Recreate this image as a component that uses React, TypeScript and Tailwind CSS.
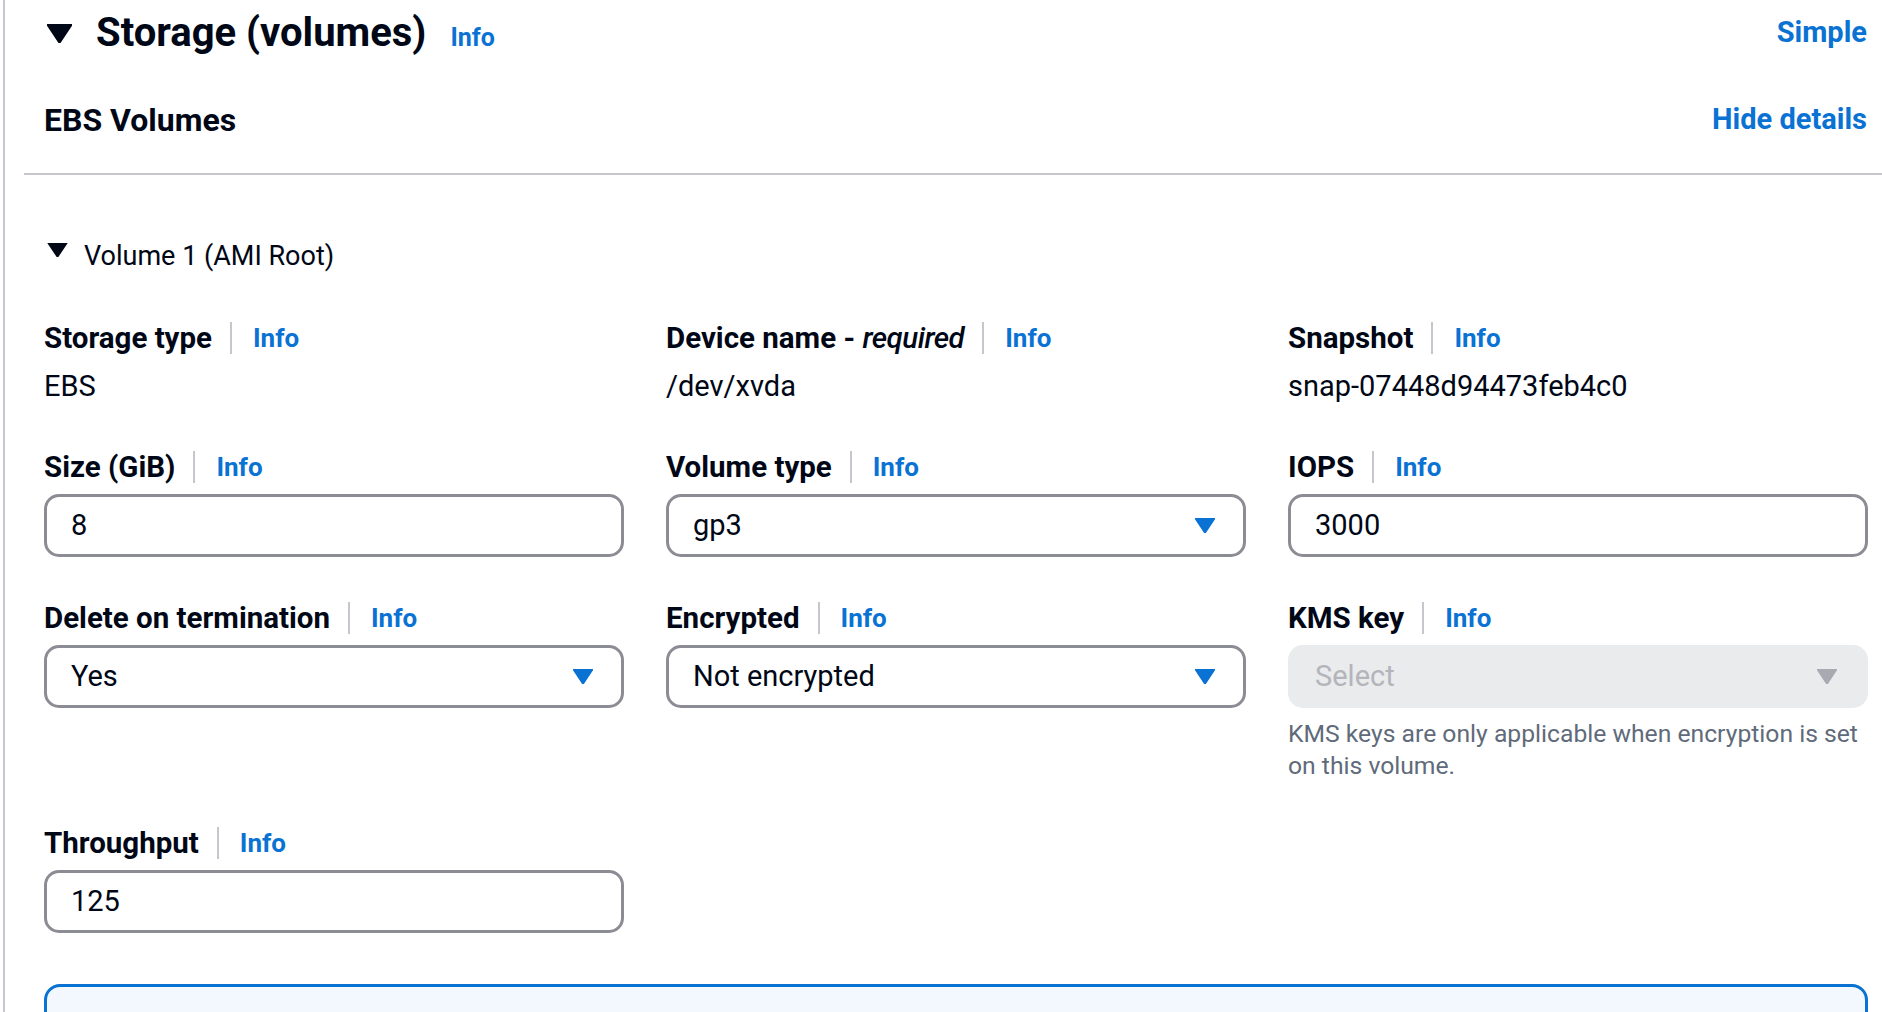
import React from "react";

const FONT = { fontFamily: "Roboto, 'Noto Sans', sans-serif" };

function Caret({ className }: { className: string }) {
  return (
    <svg viewBox="0 0 20 15" className={className}>
      <polygon points="0,0 20,0 10,15" fill="currentColor" stroke="currentColor" strokeWidth="1.5" strokeLinejoin="round" />
    </svg>
  );
}

function Info({ size = "text-[26px]" }: { size?: string }) {
  return <a className={`${size} font-bold text-[#0972d3] cursor-pointer`}>Info</a>;
}

function Label({ children }: { children: React.ReactNode }) {
  return (
    <div className="flex h-[40px] items-center">
      <span className="text-[29.5px] font-bold text-[#000716]">{children}</span>
      <span className="ml-[18px] h-[32px] border-l-2 border-[#c6c6cd]" />
      <span className="ml-[21px]">
        <Info />
      </span>
    </div>
  );
}

function TextInput({ value }: { value: string }) {
  return (
    <div className="mt-[7px] flex h-[63px] items-center rounded-[15px] border-[3px] border-[#8c8c94] bg-white pl-[24px] text-[29px] text-[#000716]">
      {value}
    </div>
  );
}

function SelectInput({ value, disabled }: { value: string; disabled?: boolean }) {
  return (
    <div
      className={`mt-[7px] flex h-[63px] items-center justify-between rounded-[15px] border-[3px] pl-[24px] pr-[28px] text-[29px] ${
        disabled
          ? "border-[#e9ebed] bg-[#e9ebed] text-[#b4b4bb]"
          : "border-[#8c8c94] bg-white text-[#000716]"
      }`}
    >
      <span>{value}</span>
      <Caret className={`h-[15px] w-[20px] ${disabled ? "text-[#a9a9b1]" : "text-[#0972d3]"}`} />
    </div>
  );
}

function Value({ children }: { children: React.ReactNode }) {
  return <div className="mt-[8px] h-[40px] text-[29px] leading-[40px] text-[#000716]">{children}</div>;
}

export default function App() {
  return (
    <div className="h-[1012px] overflow-hidden bg-white pl-[3px]" style={FONT}>
      <div className="h-full border-l-2 border-[#c6c6cd]">
        {/* section header */}
        <div className="flex h-[66px] items-center justify-between pl-[42px] pr-[15px]">
          <div className="flex items-center">
            <Caret className="h-[19px] w-[25px] text-[#000716]" />
            <h2 className="ml-[24px] text-[40px] font-bold text-[#000716]">Storage (volumes)</h2>
            <span className="ml-[24px] mt-[10px]">
              <Info size="text-[25px]" />
            </span>
          </div>
          <a className="text-[29px] font-bold text-[#0972d3]">Simple</a>
        </div>

        <div className="pl-[19px]">
          <div className="flex h-[107px] items-center justify-between pl-[20px] pr-[15px]">
            <h3 className="text-[32px] font-bold text-[#000716]">EBS Volumes</h3>
            <a className="text-[29px] font-bold text-[#0972d3]">Hide details</a>
          </div>
          <div className="border-t-2 border-[#c6c6cd]" />
        </div>

        <div className="pl-[39px] pr-[14px]">
          <div className="mt-[61px] flex h-[40px] items-center pl-[3px]">
            <Caret className="h-[14px] w-[21px] -translate-y-[6px] text-[#000716]" />
            <span className="ml-[16px] text-[27px] text-[#000716]">Volume 1 (AMI Root)</span>
          </div>

          <div className="mt-[42px] grid grid-cols-3 gap-x-[42px] gap-y-[41px]">
            <div>
              <Label>Storage type</Label>
              <Value>EBS</Value>
            </div>
            <div>
              <Label>
                Device name - <i className="font-medium tracking-[-0.5px]">required</i>
              </Label>
              <Value>/dev/xvda</Value>
            </div>
            <div>
              <Label>Snapshot</Label>
              <Value>snap-07448d94473feb4c0</Value>
            </div>

            <div>
              <Label>Size (GiB)</Label>
              <TextInput value="8" />
            </div>
            <div>
              <Label>Volume type</Label>
              <SelectInput value="gp3" />
            </div>
            <div>
              <Label>IOPS</Label>
              <TextInput value="3000" />
            </div>

            <div>
              <Label>Delete on termination</Label>
              <SelectInput value="Yes" />
            </div>
            <div>
              <Label>Encrypted</Label>
              <SelectInput value="Not encrypted" />
            </div>
            <div>
              <Label>KMS key</Label>
              <SelectInput value="Select" disabled />
              <p className="mt-[10px] text-[24.7px] leading-[32px] text-[#5f6b7a]">
                KMS keys are only applicable when encryption is set on this volume.
              </p>
            </div>

            <div>
              <Label>Throughput</Label>
              <TextInput value="125" />
            </div>
          </div>

          <div className="mt-[51px] h-[120px] rounded-[16px] border-[3px] border-[#0972d3] bg-[#f2f8fd]" />
        </div>
      </div>
    </div>
  );
}
